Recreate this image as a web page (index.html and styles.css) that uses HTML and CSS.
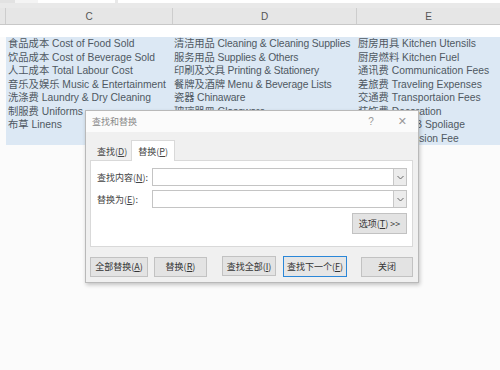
FILE: index.html
```html
<!DOCTYPE html>
<html lang="zh">
<head>
<meta charset="utf-8">
<link rel="stylesheet" href="styles.css">
</head>
<body>
<div class="app">
  <div class="ribbon">
    <div class="rb rb-a"></div>
    <div class="rb rb-b"></div>
    <div class="rb rb-c"></div>
  </div>
  <div class="colhdr">
    <div class="ch ch-row"></div>
    <div class="ch ch-c">C</div>
    <div class="ch ch-d">D</div>
    <div class="ch ch-e">E</div>
  </div>
  <div class="blankrow"></div>
  <div class="sheet">
    <div class="col col-c">
      <div>食品成本 Cost of Food Sold</div>
      <div>饮品成本 Cost of Beverage Sold</div>
      <div>人工成本 Total Labour Cost</div>
      <div>音乐及娱乐 Music &amp; Entertainment</div>
      <div>洗涤费 Laundry &amp; Dry Cleaning</div>
      <div>制服费 Uniforms</div>
      <div>布草 Linens</div>
    </div>
    <div class="col col-d">
      <div>清洁用品 Cleaning &amp; Cleaning Supplies</div>
      <div>服务用品 Supplies &amp; Others</div>
      <div>印刷及文具 Printing &amp; Stationery</div>
      <div>餐牌及酒牌 Menu &amp; Beverage Lists</div>
      <div>瓷器 Chinaware</div>
      <div>玻璃器皿 Glassware</div>
    </div>
    <div class="col col-e">
      <div>厨房用具 Kitchen Utensils</div>
      <div>厨房燃料 Kitchen Fuel</div>
      <div>通讯费 Communication Fees</div>
      <div>差旅费 Traveling Expenses</div>
      <div>交通费 Transportaion Fees</div>
      <div>装饰费 Decoration</div>
      <div>食品损耗 F&amp;B Spoliage</div>
      <div>佣金 Commission Fee</div>
    </div>
  </div>

  <div class="dialog">
    <div class="titlebar">
      <span class="title">查找和替换</span>
      <span class="tb-btns"><span class="help">?</span><span class="close">✕</span></span>
    </div>
    <div class="dbody">
      <div class="tabs">
        <div class="tab">查找(<u>D</u>)</div>
        <div class="tab tab-on">替换(<u>P</u>)</div>
      </div>
      <div class="panel">
        <div class="field">
          <label class="lbl">查找内容(<u>N</u>):</label>
          <div class="combo"><span class="combo-in"></span><span class="dd"><svg width="7" height="5" viewBox="0 0 7 5"><path d="M0.5 1 L3.5 4 L6.5 1" fill="none" stroke="#666" stroke-width="1"/></svg></span></div>
        </div>
        <div class="field">
          <label class="lbl">替换为(<u>E</u>):</label>
          <div class="combo"><span class="combo-in"></span><span class="dd"><svg width="7" height="5" viewBox="0 0 7 5"><path d="M0.5 1 L3.5 4 L6.5 1" fill="none" stroke="#666" stroke-width="1"/></svg></span></div>
        </div>
        <div class="opts-row">
          <button class="btn btn-opt">选项(<u>T</u>) &gt;&gt;</button>
        </div>
      </div>
      <div class="actions">
        <div class="grp">
          <button class="btn b1">全部替换(<u>A</u>)</button>
          <button class="btn b2">替换(<u>R</u>)</button>
        </div>
        <div class="grp grp2">
          <button class="btn b3">查找全部(<u>I</u>)</button>
          <button class="btn b4 focus">查找下一个(<u>F</u>)</button>
        </div>
        <button class="btn b5">关闭</button>
      </div>
    </div>
  </div>
</div>
</body>
</html>
```
FILE: styles.css
```css
* { box-sizing: border-box; }
html, body { margin: 0; padding: 0; }
body {
  width: 500px;
  height: 370px;
  overflow: hidden;
  background: #fbfbfb;
  font-family: "Liberation Sans", "Noto Sans CJK SC", sans-serif;
}
.app { position: relative; width: 500px; height: 370px; }

.ribbon {
  height: 8px;
  background: #e9e9e9;
  display: flex;
  align-items: flex-start;
}
.rb { height: 3px; background: #fff; }
.rb-a { width: 15px; background: #e2e2e2; }
.rb-b { width: 23px; background: #f4f4f4; }
.rb-c { width: 77px; }
.ribbon::after { content: ""; flex: 1; height: 3px; background: #fff; margin-left: 3px; }

.colhdr {
  height: 17px;
  display: flex;
  background: #e6e6e6;
  border-bottom: 1px solid #c8c8c8;
  font-size: 10px;
  color: #555;
  font-family: "Liberation Sans", sans-serif;
}
.ch { display: flex; align-items: center; justify-content: center; border-left: 1px solid #cdcdcd; }
.ch-row { width: 5px; border-left: none; }
.ch-c { width: 167px; }
.ch-d { width: 184px; }
.ch-e { flex: 1; }

.blankrow { height: 12px; background: #fff; }

.sheet {
  margin-left: 6px;
  height: 108px;
  background: #dce8f4;
  display: flex;
  font-size: 10.3px;
  line-height: 13.5px;
  color: #4f5862;
  white-space: nowrap;
  overflow: hidden;
}
.col { padding-left: 2px; overflow: hidden; }
.col-c { width: 166px; }
.col-d { width: 184px; letter-spacing: -0.12px; }
.col-e { flex: 1; }

.dialog {
  position: absolute;
  left: 85px;
  top: 110px;
  width: 334px;
  height: 173px;
  background: #f0f0f0;
  border: 1px solid #b9b9b9;
  box-shadow: 1px 2px 4px rgba(0,0,0,0.22);
  font-size: 9px;
  color: #3a3a3a;
  font-family: "Noto Sans CJK SC", sans-serif;
}
.titlebar {
  height: 21px;
  background: #fbfbfb;
  display: flex;
  align-items: center;
  justify-content: space-between;
  padding-left: 6px;
  padding-right: 11px;
}
.title { color: #8a8a8a; font-size: 9px; }
.tb-btns { display: flex; align-items: center; gap: 24px; color: #999; }
.help { font-size: 10px; font-family: "Liberation Sans", sans-serif; }
.close { font-size: 11px; font-family: "DejaVu Sans", sans-serif; color: #999; }

.dbody { padding: 7px 5px 0 4px; }
.tabs { display: flex; align-items: flex-end; height: 21px; padding-left: 3px; }
.tab {
  height: 18px;
  padding: 0 4px;
  display: flex;
  align-items: center;
  color: #444;
}
.tab-on {
  height: 21px;
  background: #fff;
  border: 1px solid #d9d9d9;
  border-bottom: none;
  margin-bottom: -1px;
  position: relative;
  padding: 0 6px;
}
.panel {
  height: 87px;
  background: #fff;
  border: 1px solid #d9d9d9;
  padding: 7px 5px 0 6px;
}
.field { display: flex; align-items: center; height: 18px; margin-bottom: 4px; }
.lbl { width: 55px; color: #444; }
.combo {
  flex: 1;
  height: 18px;
  display: flex;
  border: 1px solid #c4c4c4;
  background: #fff;
}
.combo-in { flex: 1; }
.dd {
  width: 13px;
  background: #ececec;
  border-left: 1px solid #c8c8c8;
  display: flex;
  align-items: center;
  justify-content: center;
}
.opts-row { display: flex; justify-content: flex-end; margin-top: 5px; }

.btn {
  font: inherit;
  font-size: 9px;
  color: #333;
  background: #e3e3e3;
  border: 1px solid #c2c2c2;
  height: 20px;
  padding: 0;
  display: flex;
  align-items: center;
  justify-content: center;
}
.btn-opt { width: 55px; height: 21px; }
.actions { display: flex; align-items: center; margin-top: 9px; gap: 14px; }
.grp { display: flex; gap: 6px; }
.grp2 { gap: 7px; margin-left: 1px; }
.b1 { width: 58px; }
.b2 { width: 53px; }
.b3 { width: 54px; }
.b4 { width: 64px; border: 1px solid #2b87d8; background: #e6e6e6; height: 21px; }
.b5 { width: 53px; }
```
